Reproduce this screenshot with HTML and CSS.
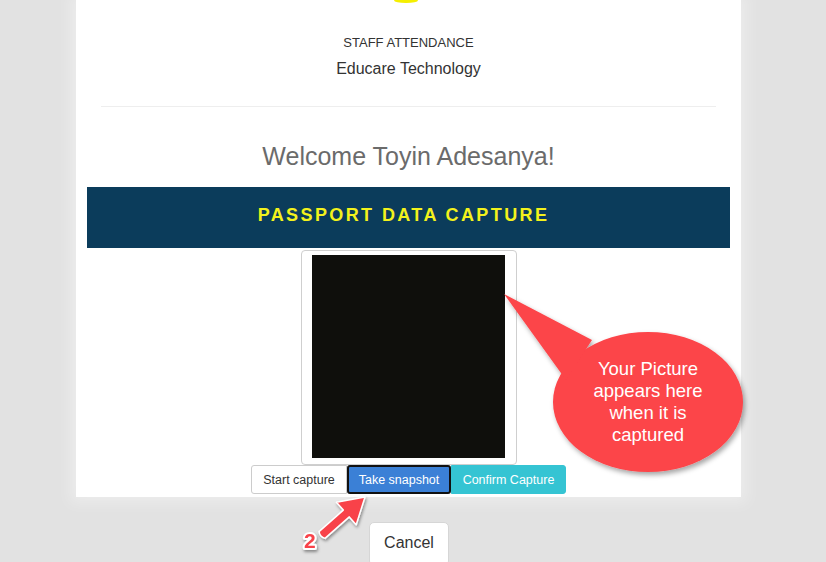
FILE: index.html
```html
<!DOCTYPE html>
<html>
<head>
<meta charset="utf-8">
<link rel="stylesheet" href="styles.css">
</head>
<body>
<div class="page">
  <div class="card">
    <div class="logo"></div>
    <div class="org">
      <div class="org-title">STAFF ATTENDANCE</div>
      <div class="org-name">Educare Technology</div>
    </div>
    <div class="divider"></div>
    <h2 class="welcome">Welcome Toyin Adesanya!</h2>
    <div class="banner"><span>PASSPORT DATA CAPTURE</span></div>
    <div class="camera">
      <div class="screen"></div>
    </div>
    <div class="btn-group">
      <button class="btn btn-default">Start capture</button>
      <button class="btn btn-primary">Take snapshot</button>
      <button class="btn btn-info">Confirm Capture</button>
    </div>
  </div>
  <div class="footer">
    <button class="btn-cancel">Cancel</button>
  </div>
</div>

<svg class="callout" width="280" height="220" viewBox="490 280 280 220">
  <defs>
    <filter id="sh" x="-20%" y="-20%" width="140%" height="140%">
      <feDropShadow dx="2" dy="3" stdDeviation="2.5" flood-color="#000" flood-opacity="0.35"/>
    </filter>
  </defs>
  <g filter="url(#sh)" fill="#fc4449">
    <ellipse cx="648" cy="402" rx="95" ry="70"/>
    <polygon points="504,294 592,340 566,380"/>
  </g>
</svg>
<div class="callout-text">Your Picture<br>appears here<br>when it is<br>captured</div>

<svg class="pointer" width="100" height="70" viewBox="290 492 100 70">
  <defs>
    <filter id="sh2" x="-30%" y="-30%" width="160%" height="160%">
      <feDropShadow dx="1" dy="2" stdDeviation="1.5" flood-color="#000" flood-opacity="0.4"/>
    </filter>
  </defs>
  <g filter="url(#sh2)">
    <path d="M319,531.6 L343.3,510.1 L336.4,502.3 L365,497 L356.2,524.7 L349.3,516.9 L325,538.4 Q320,537 319,531.6 Z" fill="#f8434a" stroke="#fff" stroke-width="1.5" stroke-linejoin="round"/>
    <text x="304" y="548" class="num">2</text>
  </g>
</svg>
</body>
</html>
```

FILE: styles.css
```css
html, body {
  margin: 0;
  padding: 0;
}
body {
  background: #e2e2e2;
  font-family: "Liberation Sans", Arial, sans-serif;
  width: 826px;
  height: 562px;
  overflow: hidden;
  position: relative;
}
.page {
  padding-left: 76px;
}
.card {
  width: 665px;
  height: 497px;
  background: #fff;
  box-shadow: 0 0 14px 6px rgba(255,255,255,0.35);
  display: flex;
  flex-direction: column;
  align-items: center;
}
.logo {
  width: 24px;
  height: 5px;
  margin-top: -2px;
  border-radius: 50%;
  background: #f5ef00;
  margin-left: -6px;
  filter: blur(0.6px);
}
.org {
  margin-top: 30px;
  text-align: center;
  color: #333;
}
.org-title {
  font-size: 13px;
  line-height: 20px;
}
.org-name {
  font-size: 16px;
  line-height: 22px;
  margin-top: 5px;
}
.divider {
  align-self: stretch;
  margin: 26px 25px 0;
  height: 1px;
  background: #eeeeee;
}
.welcome {
  margin: 34px 0 0;
  font-weight: normal;
  font-size: 25px;
  line-height: 30px;
  color: #6b6b6b;
}
.banner {
  align-self: stretch;
  margin: 16px 11px 0;
  height: 61px;
  background: #0b3c5b;
  display: flex;
  align-items: center;
  justify-content: center;
}
.banner span {
  color: #f3f21c;
  font-weight: bold;
  font-size: 18px;
  letter-spacing: 2.4px;
  padding-bottom: 5px;
  padding-right: 10px;
}
.camera {
  margin-top: 2px;
  width: 214px;
  height: 213px;
  border: 1px solid #cfcfcf;
  border-radius: 4px;
  display: flex;
}
.screen {
  width: 193px;
  height: 203px;
  margin: 4px 0 0 10px;
  background: #0f0f0c;
}
.btn-group {
  display: flex;
  height: 29px;
}
.btn {
  font-family: "Liberation Sans", Arial, sans-serif;
  font-size: 12.5px;
  height: 29px;
  margin: 0;
  padding: 0;
  border: 1px solid transparent;
  white-space: nowrap;
  cursor: pointer;
}
.btn-default {
  width: 96px;
  background: #fff;
  border-color: #cccccc;
  color: #333;
  border-radius: 3px 0 0 3px;
}
.btn-primary {
  width: 104px;
  background: #3b80d6;
  color: #fff;
  border: 2px solid #111;
  border-radius: 3px;
}
.btn-info {
  width: 115px;
  background: #35c4d3;
  color: #fff;
  border-color: #35c4d3;
  border-radius: 0 3px 3px 0;
}
.footer {
  width: 665px;
  display: flex;
  justify-content: center;
  padding-top: 25px;
}
.btn-cancel {
  width: 80px;
  height: 44px;
  background: #fff;
  border: 1px solid #d6d6d6;
  border-radius: 5px;
  font-family: "Liberation Sans", Arial, sans-serif;
  font-size: 16px;
  color: #333;
  padding: 0 0 3px;
  margin-left: 1px;
}
.callout {
  position: absolute;
  left: 490px;
  top: 280px;
}
.callout-text {
  position: absolute;
  left: 548px;
  top: 358px;
  width: 200px;
  text-align: center;
  color: #fff;
  font-size: 18.5px;
  line-height: 22px;
}
.pointer {
  position: absolute;
  left: 290px;
  top: 492px;
  overflow: visible;
}
.num {
  font-family: "Liberation Sans", Arial, sans-serif;
  font-weight: bold;
  font-size: 21px;
  fill: #f8434a;
  stroke: #fff;
  stroke-width: 4px;
  paint-order: stroke;
  stroke-linejoin: round;
}
```
